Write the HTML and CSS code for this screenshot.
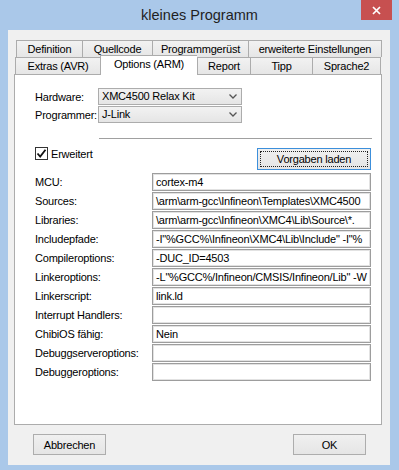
FILE: index.html
```html
<!DOCTYPE html>
<html lang="de">
<head>
    <meta charset="UTF-8">
    <title>kleines Programm</title>
    <link rel="stylesheet" href="styles.css">
</head>
<body>
    <div class="window">
        <div class="titlebar">
            <div class="title">kleines Programm</div>
            <div class="close">
                <svg width="9" height="9" viewBox="0 0 9 9"><path d="M1 1 L8 8 M8 1 L1 8" stroke="#fff" stroke-width="1.7"/></svg>
            </div>
        </div>

        <div class="client">
            <div class="tabs">
                <div class="tab-row row-back">
                    <div class="tab">Definition</div>
                    <div class="tab">Quellcode</div>
                    <div class="tab">Programmgerüst</div>
                    <div class="tab last">erweiterte Einstellungen</div>
                </div>
                <div class="tab-row row-front">
                    <div class="tab">Extras (AVR)</div>
                    <div class="tab active">Options (ARM)</div>
                    <div class="tab">Report</div>
                    <div class="tab">Tipp</div>
                    <div class="tab last">Sprache2</div>
                </div>
            </div>

            <div class="panel">
                <div class="hw">
                    <div class="label">Hardware:</div>
                    <div class="select">XMC4500 Relax Kit<svg class="arrow" width="8" height="5" viewBox="0 0 8 5"><path d="M0.5 0.5 L4 4 L7.5 0.5" fill="none" stroke="#555" stroke-width="1.3"/></svg></div>
                    <div class="label">Programmer:</div>
                    <div class="select">J-Link<svg class="arrow" width="8" height="5" viewBox="0 0 8 5"><path d="M0.5 0.5 L4 4 L7.5 0.5" fill="none" stroke="#555" stroke-width="1.3"/></svg></div>
                </div>

                <div class="rule"></div>

                <div class="options-row">
                    <div class="check">
                        <span class="box"><svg width="11" height="11" viewBox="0 0 11 11"><path d="M1.5 5.5 L4.2 8.5 L9.5 1.8" fill="none" stroke="#111" stroke-width="1.8"/></svg></span>
                        <span>Erweitert</span>
                    </div>
                    <div class="button default"><span class="focus">Vorgaben laden</span></div>
                </div>

                <div class="fields">
                    <div class="label">MCU:</div>
                    <div class="field">cortex-m4</div>
                    <div class="label">Sources:</div>
                    <div class="field">\arm\arm-gcc\Infineon\Templates\XMC4500</div>
                    <div class="label">Libraries:</div>
                    <div class="field">\arm\arm-gcc\Infineon\XMC4\Lib\Source\*.</div>
                    <div class="label">Includepfade:</div>
                    <div class="field">-I"%GCC%\Infineon\XMC4\Lib\Include" -I"%</div>
                    <div class="label">Compileroptions:</div>
                    <div class="field">-DUC_ID=4503</div>
                    <div class="label">Linkeroptions:</div>
                    <div class="field">-L"%GCC%/Infineon/CMSIS/Infineon/Lib" -W</div>
                    <div class="label">Linkerscript:</div>
                    <div class="field">link.ld</div>
                    <div class="label">Interrupt Handlers:</div>
                    <div class="field"></div>
                    <div class="label">ChibiOS fähig:</div>
                    <div class="field">Nein</div>
                    <div class="label">Debuggserveroptions:</div>
                    <div class="field"></div>
                    <div class="label">Debuggeroptions:</div>
                    <div class="field"></div>
                </div>
            </div>

            <div class="footer">
                <div class="button">Abbrechen</div>
                <div class="button">OK</div>
            </div>
        </div>
    </div>
</body>
</html>
```

FILE: styles.css
```css
body {
    margin: 0;
    overflow: hidden;
    font-family: "Liberation Sans", Arial, sans-serif;
    font-size: 11px;
    letter-spacing: -0.2px;
    color: #000;
}

.window {
    width: 399px;
    height: 470px;
    background-color: #aac8e9;
    display: flex;
    flex-direction: column;
}

/* Titelleiste */
.titlebar {
    height: 30px;
    display: grid;
    grid-template-columns: 1fr auto 1fr;
}

.title {
    grid-column: 2;
    font-size: 14.5px;
    letter-spacing: 0;
    line-height: 31px;
    color: #1f1f1f;
}

.close {
    grid-column: 3;
    justify-self: end;
    margin-right: 7px;
    width: 31px;
    height: 20px;
    background-color: #c75050;
    display: flex;
    align-items: center;
    justify-content: center;
}

.client {
    flex: 1;
    margin: 0 9px 5px 8px;
    padding: 10px 0 0 6px;
    background-color: #f0f0f0;
}

/* Reiter */
.tabs {
    width: 368px;
}

.tab-row {
    display: grid;
    grid-auto-rows: 17px;
}

.row-back {
    margin-left: 2px;
    grid-template-columns: 66px 70px 96px 134px;
}

.row-front {
    margin-left: 1px;
    grid-template-columns: 85px 97px 53px 62px 69px;
}

.tab {
    box-sizing: border-box;
    border-top: 1px solid #acacac;
    border-left: 1px solid #acacac;
    background: linear-gradient(#f2f2f2, #e6e6e6);
    text-align: center;
    line-height: 16px;
    white-space: nowrap;
    overflow: hidden;
}

.tab.last {
    border-right: 1px solid #acacac;
}

.tab.active {
    background: #fff;
    margin-top: -2px;
    margin-bottom: -1px;
    line-height: 17px;
    position: relative;
    z-index: 1;
}

.panel {
    box-sizing: border-box;
    width: 368px;
    height: 351px;
    border: 1px solid #acacac;
    background-color: #fff;
    padding: 13px 10px 0 20px;
}

.label {
    white-space: nowrap;
}

/* Hardware */
.hw {
    display: grid;
    grid-template-columns: 63px 144px;
    grid-auto-rows: 17px;
    row-gap: 1px;
    align-items: center;
}

.select {
    box-sizing: border-box;
    height: 17px;
    border: 1px solid #acacac;
    background: linear-gradient(#f2f2f2, #e5e5e5);
    padding-left: 3px;
    line-height: 15px;
    display: flex;
    align-items: center;
    justify-content: space-between;
    padding-right: 4px;
}

.rule {
    margin: 15px 0 0 64px;
    width: 273px;
    height: 1px;
    background-color: #a0a0a0;
}

.options-row {
    margin-top: 9px;
    display: flex;
    align-items: flex-start;
}

.check {
    margin-top: -1px;
    display: flex;
    align-items: center;
    gap: 3px;
}

.box {
    box-sizing: border-box;
    width: 13px;
    height: 13px;
    border: 1px solid #333;
    background: #fff;
    display: flex;
    align-items: center;
    justify-content: center;
}

.button {
    box-sizing: border-box;
    width: 73px;
    height: 21px;
    border: 1px solid #adadad;
    background: linear-gradient(#f0f0f0, #e5e5e5);
    display: flex;
    align-items: center;
    justify-content: center;
}

.button.default {
    margin-left: auto;
    width: 114px;
    height: 22px;
    border-color: #3c8fdb;
    padding: 2px;
}

.focus {
    flex: 1;
    align-self: stretch;
    border: 1px dotted #222;
    display: flex;
    align-items: center;
    justify-content: center;
}

/* Felder */
.fields {
    margin-top: 3px;
    display: grid;
    grid-template-columns: 117px 219px;
    grid-auto-rows: 18px;
    row-gap: 1px;
    align-items: center;
}

.field {
    box-sizing: border-box;
    height: 18px;
    border: 1px solid #9d9d9d;
    box-shadow: inset 0 0 0 1px #e2e2e2;
    padding-left: 3px;
    line-height: 16px;
    white-space: nowrap;
    overflow: hidden;
}

.footer {
    margin-top: 9px;
    padding: 0 24px 0 19px;
    display: flex;
    justify-content: space-between;
}
```
